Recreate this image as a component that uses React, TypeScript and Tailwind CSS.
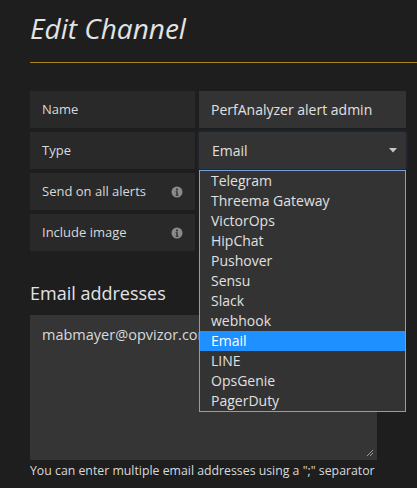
const TYPES = [
  "Telegram",
  "Threema Gateway",
  "VictorOps",
  "HipChat",
  "Pushover",
  "Sensu",
  "Slack",
  "webhook",
  "Email",
  "LINE",
  "OpsGenie",
  "PagerDuty",
]

function InfoIcon() {
  return (
    <svg width="12" height="12" viewBox="0 0 12 12" aria-hidden>
      <circle cx="6" cy="6" r="5.5" fill="#8a8a8a" />
      <circle cx="6" cy="3.4" r="1" fill="#292929" />
      <path d="M4.6 5.2h2.1v3.6h0.8v1H4.6v-1h0.8V6.2h-0.8z" fill="#292929" />
    </svg>
  )
}

function Label({ children, info }: { children: string; info?: boolean }) {
  return (
    <div className="flex h-[37px] items-center justify-between bg-[#292929] pl-3 pr-3 text-[13px] text-[#d8d9da]">
      <span>{children}</span>
      {info && <InfoIcon />}
    </div>
  )
}

export default function App() {
  return (
    <div
      className="relative h-[488px] w-[417px] overflow-hidden bg-[#1f1e1f] pl-[30px] text-[#d8d9da]"
      style={{ fontFamily: '"Open Sans", "Noto Sans", sans-serif' }}
    >
      <h1 className="pt-[9px] text-[28px] italic leading-[38px] text-[#e3e3e3]">Edit Channel</h1>
      <div className="mt-[15px] h-px bg-[#a88522]" />

      <div className="mt-[28px] grid grid-cols-[165px_207px] gap-1">
        <Label>Name</Label>
        <div className="flex h-[37px] items-center bg-[#333333] px-3 text-[14px] text-[#e0e0e0]">
          PerfAnalyzer alert admin
        </div>
        <Label>Type</Label>
        <div className="flex h-[37px] items-center justify-between border border-[#2c3440] bg-[#333333] pl-3 pr-2 text-[14px] text-[#e0e0e0] shadow-[0_0_4px_rgba(60,90,130,0.35)]">
          <span>Email</span>
          <svg width="8" height="5" viewBox="0 0 8 5" aria-hidden>
            <path d="M0 0h8L4 4.5z" fill="#c8c8c8" />
          </svg>
        </div>
        <Label info>Send on all alerts</Label>
        <div />
        <Label info>Include image</Label>
        <div />
      </div>

      <h3 className="mt-[30px] text-[18px] leading-[24px] text-[#e3e3e3]">Email addresses</h3>
      <div className="relative mt-[10px] h-[145px] w-[347px] bg-[#353535] px-3 pt-[9px] text-[14.5px] text-[#d8d9da]">
        mabmayer@opvizor.com
        <svg className="absolute bottom-[3px] right-[3px]" width="8" height="8" viewBox="0 0 8 8" aria-hidden>
          <path d="M7 1L1 7M7 4L4 7" stroke="#9a9a9a" strokeWidth="1" />
        </svg>
      </div>
      <p className="mt-[1px] text-[12.3px] leading-[20px] text-[#d8d9da]">
        You can enter multiple email addresses using a ";" separator
      </p>

      <ul className="absolute left-[199px] top-[170px] w-[207px] border border-[#7c9fd6] bg-[#333333] text-[14px] text-[#e0e0e0]">
        {TYPES.map((t) => (
          <li
            key={t}
            className={
              t === "Email"
                ? "h-[20px] bg-[#1e90ff] pl-[11px] leading-[20px] text-white"
                : "h-[20px] pl-[11px] leading-[20px]"
            }
          >
            {t}
          </li>
        ))}
      </ul>
    </div>
  )
}
